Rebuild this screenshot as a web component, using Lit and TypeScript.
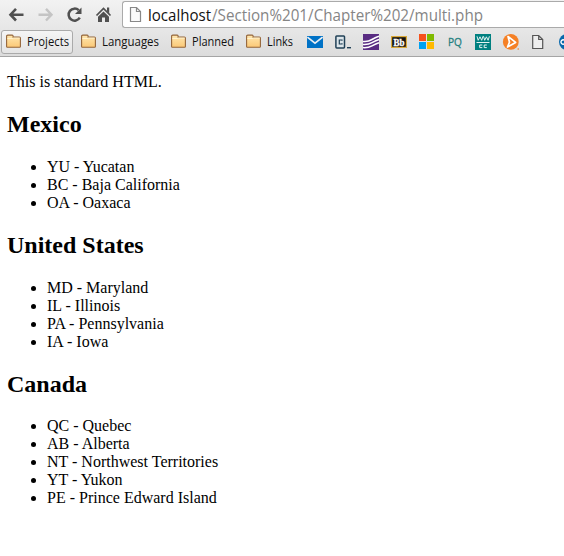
import { LitElement, html, svg, css } from "lit";
import { customElement } from "lit/decorators.js";

const folder = html`<svg class="icon" viewBox="0 0 16 16">
  <defs><linearGradient id="f" x1="0" y1="0" x2="0" y2="1"><stop offset="0" stop-color="#ffe7b0"/><stop offset="1" stop-color="#fbc876"/></linearGradient></defs>
  <path d="M.6 12.500V2.300Q.6 1.100 1.800 1.100h4.400q.9 0 .9 1v1h6.300q1 0 1 1v8.400q0 .8-.8.8H1.400q-.8 0-.8-.8z" fill="url(#f)" stroke="#94653a" stroke-width="1.100"/>
  <path d="M1.300 4.500h5.500l.8-.5h6.200" fill="none" stroke="#fff5d5" stroke-width=".9"/></svg>`;

const glyphs = [
  svg`<path d="M0 2h16v12H0z" fill="#0072c6"/><path d="M.4 3.200 8 9.200l7.600-6" fill="none" stroke="#e7edf2" stroke-width="1.700"/>`,
  svg`<rect x=".9" y="1.900" width="8.600" height="12" rx=".8" fill="#dce5ea" stroke="#204056" stroke-width="1.500"/><path d="M7 6.800V6H4.300v4H7v-.8" fill="none" stroke="#204056" stroke-width="1.200"/><path d="M12 13h4v1.400h-4z" fill="#204056"/>`,
  svg`<path d="M0 0h16v16H0z" fill="#592c82"/><g fill="none" stroke="#fff" stroke-width="1.500"><path d="M0 7.400Q5 8 9 5.500T16 2.200M0 10.500Q5 11 9 8.700T16 5.500M0 13.600Q5 14 9 11.900T16 8.800"/></g>`,
  svg`<rect x=".6" y="2.600" width="14.800" height="10.800" fill="#111" stroke="#d9a93a" stroke-width="1.200"/><text x="2.500" y="11.500" font-size="9.500" font-weight="700" fill="#fff" stroke="#fff" stroke-width=".3" font-family="Liberation Serif,serif" textLength="11" lengthAdjust="spacingAndGlyphs">Bb</text>`,
  svg`<path d="M0 0h7v7H0z" fill="#f6511d"/><path d="M8 0h7v7H8z" fill="#7fba00"/><path d="M0 8h7v7H0z" fill="#00a1f1"/><path d="M8 8h7v7H8z" fill="#ffb900"/>`,
  svg`<text x="1" y="12" font-size="11.500" fill="#258080" stroke="#258080" stroke-width=".3" font-family="Open Sans,sans-serif" textLength="14" lengthAdjust="spacingAndGlyphs">PQ</text>`,
  svg`<path d="M0 0h16v16H0z" fill="#008080"/><g fill="none" stroke="#e5f3f2"><path d="M2 2.300l1.200 4L5 2.800l1.700 3.500L8 2.300M8.500 2.300l1.200 4L11.400 2.800l1.700 3.500 1.300-4"/><path d="M1.500 8.500h13" stroke-width="1"/><path d="M7.300 11H4.700v2.600h2.600M11.800 11H9.200v2.600h2.600" stroke-width="1"/></g>`,
  svg`<circle cx="7.800" cy="7.900" r="7.900" fill="#f58025"/><path d="M5 2.500 12.600 8.400 4.500 13l2-4.800z" fill="none" stroke="#fff" stroke-width="1.700" stroke-linejoin="round"/><circle cx="15.200" cy="15" r=".8" fill="#f58025"/>`,
  svg`<path d="M1.700 1.500h6l4 4v9h-10zM7.700 1.500v4h4" fill="#eee" stroke="#555" stroke-width="1.200"/>`,
  svg`<circle cx="8" cy="8" r="8" fill="#0868ac"/><path d="M5.500 6.200a2.200 2.200 0 1 0 0 3.600" fill="none" stroke="#fff" stroke-width="1.300"/>`,
];

const bookmarks = [["Projects", 42], ["Languages", 57], ["Planned", 42], ["Links", 26]] as const;

const regions = [
  { name: "Mexico", items: ["YU - Yucatan", "BC - Baja California", "OA - Oaxaca"] },
  { name: "United States", items: ["MD - Maryland", "IL - Illinois", "PA - Pennsylvania", "IA - Iowa"] },
  { name: "Canada", items: ["QC - Quebec", "AB - Alberta", "NT - Northwest Territories", "YT - Yukon", "PE - Prince Edward Island"] },
];

@customElement("app-root")
export class AppRoot extends LitElement {
  static styles = css`
    :host { display: block; height: 556px; overflow: hidden; background: #fff; color: #000; }
    .chrome { box-sizing: border-box; height: 57px; background: linear-gradient(#f2f2f2, #dcdcdc); border-bottom: 1px solid #a5a5a5; overflow: hidden; }
    .toolbar { display: flex; height: 29px; }
    .nav { display: flex; gap: 13px; width: 122px; box-sizing: border-box; padding: 7px 0 0 9px; flex: none; }
    .icon { width: 16px; height: 16px; flex: none; display: block; overflow: visible; }
    .omnibox { flex: 1; height: 27px; box-sizing: border-box; margin-top: 1px; border: 1px solid #aaa; border-right: 0; border-radius: 3px 0 0 3px; background: #fff; display: flex; padding: 5px 0 0 6px; }
    .url { height: 20px; flex: none; overflow: visible; font: 17px "Open Sans", sans-serif; fill: #858585; }
    .host { fill: #111; margin-left: 3px; }
    .bar { display: flex; height: 26px; padding-left: 1px; align-items: flex-start; }
    .bookmark { display: flex; box-sizing: border-box; height: 24px; margin-top: 1px; padding: 3px 3px 0 4px; gap: 5px; border: 1px solid transparent; border-radius: 3px; margin-right: 3px; }
    .bookmark.active { border-color: #aaa; background: linear-gradient(#f5f5f5, #e4e4e4); }
    .label { height: 16px; overflow: visible; font: 12px "Open Sans", sans-serif; fill: #111; }
    .sites { display: flex; gap: 12px; padding: 5px 0 0 7px; }
    .page { padding: 16px 7px; font: 16px/18px "Liberation Serif", "Times New Roman", serif; }
    p { margin: 0; }
    h2 { font-size: 24px; line-height: 27px; margin: 19.92px 0; }
    ul { margin: 0; padding-left: 40px; }
  `;

  render() {
    return html`
      <div class="chrome">
        <div class="toolbar">
          <div class="nav">
            <svg class="icon" viewBox="0 0 16 16"><path d="M7 1.900 1.500 7.700 7 13.500M2 7.700h12.500" fill="none" stroke="#505050" stroke-width="2.600"/></svg>
            <svg class="icon" viewBox="0 0 16 16"><path d="M8 1.900l5.500 5.800L8 13.500M13 7.700H.5" fill="none" stroke="#c4c4c4" stroke-width="2.400"/></svg>
            <svg class="icon" viewBox="0 0 16 16"><path d="M12.800 10.700A6 6 0 1 1 11.700 3.200" fill="none" stroke="#505050" stroke-width="2.500"/><path d="M14.500.500V7H8z" fill="#505050"/></svg>
            <svg class="icon" viewBox="0 0 16 16"><path d="M7.500 4.400l5.500 5.300V15H9v-4.500H6V15H2V9.700z" fill="#505050"/><path d="M.5 8.500l7-7 7 7" fill="none" stroke="#505050" stroke-width="1.700"/><path d="M11 .5h2.200v6l-2.200-2z" fill="#505050"/></svg>
          </div>
          <div class="omnibox">
            <svg class="icon" viewBox="0 0 16 16"><path d="M1.500.5h6l4 4v10h-10zM7.500.5v4h4" fill="#fafafa" stroke="#888" stroke-width="1.200"/></svg>
            <svg class="url host" width="64"><text x="0" y="14" textLength="63" lengthAdjust="spacingAndGlyphs">localhost</text></svg>
            <svg class="url" width="271"><text x="0" y="14" textLength="271" lengthAdjust="spacingAndGlyphs">/Section%201/Chapter%202/multi.php</text></svg>
          </div>
        </div>
        <div class="bar">
          ${bookmarks.map(([name, width], i) => html`<div class="bookmark ${i === 0 ? "active" : ""}">${folder}<svg class="label" width=${width}><text x="0" y="12" textLength=${width} lengthAdjust="spacingAndGlyphs">${name}</text></svg></div>`)}
          <div class="sites">${glyphs.map((g) => html`<svg class="icon" viewBox="0 0 16 16">${g}</svg>`)}</div>
        </div>
      </div>
      <div class="page">
        <p>This is standard HTML.</p>
        ${regions.map((r) => html`<h2>${r.name}</h2><ul>${r.items.map((item) => html`<li>${item}</li>`)}</ul>`)}
      </div>`;
  }
}
